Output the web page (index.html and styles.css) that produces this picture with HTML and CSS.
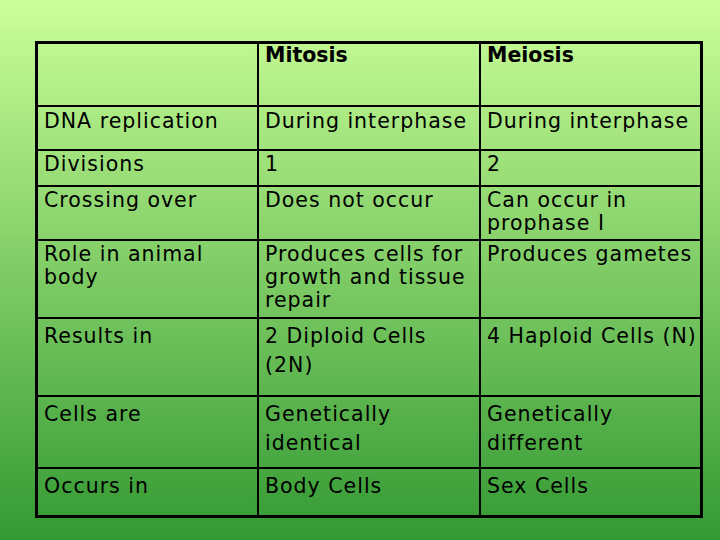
FILE: index.html
```html
<!DOCTYPE html>
<html>
<head>
<meta charset="utf-8">
<link rel="stylesheet" href="styles.css">
</head>
<body>
<div class="slide">
  <div class="grid">
    <div class="c h1"></div>
    <div class="c h1 head">Mitosis</div>
    <div class="c h1 head last">Meiosis</div>

    <div class="c r2">DNA replication</div>
    <div class="c r2">During interphase</div>
    <div class="c r2 last">During interphase</div>

    <div class="c r3">Divisions</div>
    <div class="c r3">1</div>
    <div class="c r3 last">2</div>

    <div class="c r4">Crossing over</div>
    <div class="c r4">Does not occur</div>
    <div class="c r4 last">Can occur in<br>prophase I</div>

    <div class="c r5">Role in animal<br>body</div>
    <div class="c r5">Produces cells for<br>growth and tissue<br>repair</div>
    <div class="c r5 last">Produces gametes</div>

    <div class="c loose">Results in</div>
    <div class="c loose">2 Diploid Cells<br>(2N)</div>
    <div class="c loose last">4 Haploid Cells (N)</div>

    <div class="c loose">Cells are</div>
    <div class="c loose">Genetically<br>identical</div>
    <div class="c loose last">Genetically<br>different</div>

    <div class="c loose bottom">Occurs in</div>
    <div class="c loose bottom">Body Cells</div>
    <div class="c loose bottom last">Sex Cells</div>
  </div>
</div>
</body>
</html>
```
FILE: styles.css
```css
html, body {
  margin: 0;
  padding: 0;
}
.slide {
  width: 720px;
  height: 540px;
  box-sizing: border-box;
  padding: 41px 0 0 35px;
  background: linear-gradient(to bottom, #ccff99 0%, #339933 100%);
  font-family: "DejaVu Sans", sans-serif;
  font-size: 20.5px;
  letter-spacing: 1px;
  color: #000;
}
.grid {
  display: grid;
  width: 668px;
  box-sizing: border-box;
  border: 3px solid #000;
  grid-template-columns: 221px 222px 219px;
  grid-template-rows: 63px 44px 36px 54px 78px 78px 72px 46px;
}
.c {
  box-sizing: border-box;
  border-right: 2px solid #000;
  border-bottom: 2px solid #000;
  padding: 2px 0 0 6px;
  line-height: 23px;
  white-space: nowrap;
}
.c.last {
  border-right: none;
}
.c.bottom {
  border-bottom: none;
}
.head {
  font-weight: bold;
  letter-spacing: 0;
  padding-top: 0;
}
.r2 {
  padding-top: 3px;
}
.loose {
  line-height: 29px;
  padding-top: 3px;
}
```
